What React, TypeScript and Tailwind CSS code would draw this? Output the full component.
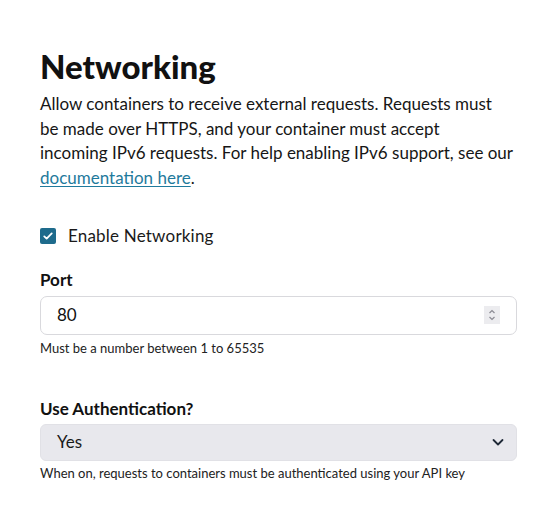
import { useState } from "react"

const App = () => {
  const [enabled, setEnabled] = useState(true)
  const [port, setPort] = useState("80")

  return (
    <div className="min-h-screen bg-white px-10 pt-[46px] font-['Lato',sans-serif] text-[#111]">
      <h1 className="text-[33px] font-black leading-[40px]">Networking</h1>
      <p className="mt-[6px] whitespace-nowrap text-[17px] leading-[24.5px] text-[#161616]">
        Allow containers to receive external requests. Requests must
        <br />
        be made over HTTPS, and your container must accept
        <br />
        incoming IPv6 requests. For help enabling IPv6 support, see our
        <br />
        <a href="#" className="text-[#1f7a9c] underline underline-offset-2">
          documentation here
        </a>
        .
      </p>

      <label className="mt-[33px] flex items-center gap-3 cursor-pointer">
        <span
          className="flex h-4 w-4 items-center justify-center rounded-[2px] bg-[#1e6b8c]"
          onClick={() => setEnabled(!enabled)}
        >
          {enabled && (
            <svg viewBox="0 0 16 16" className="h-3 w-3" fill="none" stroke="white" strokeWidth="2.4" strokeLinecap="round" strokeLinejoin="round">
              <path d="M3 8.5l3.2 3L13 4.5" />
            </svg>
          )}
        </span>
        <span className="text-[17px] tracking-[0.2px] text-[#1a1a1a]">Enable Networking</span>
      </label>

      <div className="mt-[19px]">
        <div className="text-[17px] font-bold leading-6">Port</div>
        <div className="mt-[4px] flex h-[39px] items-center rounded-[7px] border border-[#d9d9dd] pl-4 pr-4">
          <input
            value={port}
            onChange={(e) => setPort(e.target.value)}
            className="flex-1 bg-transparent text-[17px] outline-none"
          />
          <span className="flex h-[18px] w-[16px] flex-col items-center justify-center bg-[#ececef]">
            <svg viewBox="0 0 10 14" className="h-[14px] w-[10px]" fill="none" stroke="#8b8b93" strokeWidth="1.2">
              <path d="M2.5 5L5 2.5 7.5 5" />
              <path d="M2.5 9L5 11.5 7.5 9" />
            </svg>
          </span>
        </div>
        <p className="mt-[5px] text-[13px] leading-4 text-[#222]">Must be a number between 1 to 65535</p>
      </div>

      <div className="mt-[41px]">
        <div className="text-[17px] font-bold leading-6">Use Authentication?</div>
        <div className="mt-[3px] flex h-[37px] items-center justify-between rounded-[6px] border border-[#e1e1e6] bg-[#e8e8ed] pl-4 pr-[10px]">
          <span className="text-[17px] text-[#1a1a1a]">Yes</span>
          <svg viewBox="0 0 16 16" className="h-4 w-4" fill="none" stroke="#1f2937" strokeWidth="1.8" strokeLinecap="round" strokeLinejoin="round">
            <path d="M3.5 6l4.5 4.5L12.5 6" />
          </svg>
        </div>
        <p className="mt-[4px] text-[13px] leading-4 text-[#222]">
          When on, requests to containers must be authenticated using your API key
        </p>
      </div>
    </div>
  )
}

export default App
